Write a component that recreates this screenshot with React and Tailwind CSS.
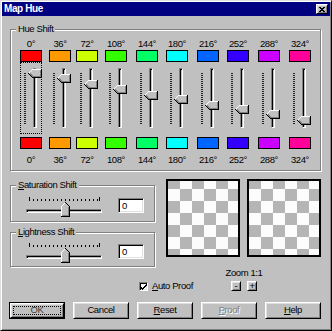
import React from "react";

// Win95 bevels
const raised =
  "bg-[#c0c0c0] border border-t-white border-l-white border-r-black border-b-black shadow-[inset_1px_1px_0_#dfdfdf,inset_-1px_-1px_0_#808080]";
const sunken =
  "bg-white border border-t-[#808080] border-l-[#808080] border-r-white border-b-white shadow-[inset_1px_1px_0_#000,inset_-1px_-1px_0_#dfdfdf]";
const etched =
  "border border-[#808080] shadow-[inset_1px_1px_0_#fff,1px_1px_0_#fff]";

const hues = [
  { label: "0°", swatch: "bg-[#ff0000]", space: "mr-[7px]", thumb: "top-[7px]" },
  { label: "36°", swatch: "bg-[#ff9900]", space: "mr-[5px]", thumb: "top-[12px]" },
  { label: "72°", swatch: "bg-[#ccff00]", space: "mr-[7px]", thumb: "top-[18px]" },
  { label: "108°", swatch: "bg-[#33ff00]", space: "mr-[9px]", thumb: "top-[23px]" },
  { label: "144°", swatch: "bg-[#00ff66]", space: "mr-[8px]", thumb: "top-[29px]" },
  { label: "180°", swatch: "bg-[#00ffff]", space: "mr-[9px]", thumb: "top-[33px]" },
  { label: "216°", swatch: "bg-[#0066ff]", space: "mr-[8px]", thumb: "top-[39px]" },
  { label: "252°", swatch: "bg-[#3300ff]", space: "mr-[9px]", thumb: "top-[43px]" },
  { label: "288°", swatch: "bg-[#cc00ff]", space: "mr-[9px]", thumb: "top-[48px]" },
  { label: "324°", swatch: "bg-[#ff0099]", space: "", thumb: "top-[54px]" },
];

const VThumb = () => (
  <svg width="14" height="9" viewBox="0 0 14 9" shapeRendering="crispEdges">
    <path d="M4.5 0.5H13.5V8.5H4.5L0.5 4.5Z" fill="#c0c0c0" />
    <path d="M13 0.5H4.5L0.5 4.5" fill="none" stroke="#fff" />
    <path d="M0.5 4.5L4.5 8.5H13.5V0" fill="none" stroke="#000" />
    <path d="M2 4.5L5 7.5H12.5V1" fill="none" stroke="#808080" />
  </svg>
);

const HThumb = () => (
  <svg width="9" height="15" viewBox="0 0 9 15" shapeRendering="crispEdges">
    <path d="M0.5 14.5V4.5L4.5 0.5L8.5 4.5V14.5Z" fill="#c0c0c0" />
    <path d="M0.5 14V4.5L4.5 0.5" fill="none" stroke="#fff" />
    <path d="M4.5 0.5L8.5 4.5V14.5H0" fill="none" stroke="#000" />
    <path d="M7.5 5V13.5H1" fill="none" stroke="#808080" />
  </svg>
);

const GroupLabel = ({ children }) => (
  <span className="absolute -top-[7px] left-[5px] bg-[#c0c0c0] px-[2px] leading-[12px] whitespace-nowrap">
    {children}
  </span>
);

const ShiftGroup = ({ label, pad }) => (
  <div className={`relative w-[145px] ${etched} ${pad}`}>
    <GroupLabel>{label}</GroupLabel>
    <div className="flex items-start pl-[15px]">
      <div className="relative h-[20px] w-[76px]">
        <div className="absolute left-[3px] top-[1px] h-[2px] w-[71px] bg-[repeating-linear-gradient(90deg,#000_0_1px,transparent_1px_4px)]" />
        <div className="absolute left-[3px] -top-[1px] h-[4px] w-px bg-black" />
        <div className="absolute left-[73px] -top-[1px] h-[4px] w-px bg-black" />
        <div className="absolute left-0 top-[11px] h-[4px] w-[76px] border border-t-[#808080] border-l-[#808080] border-r-white border-b-white shadow-[inset_1px_1px_0_#000]" />
        <div className="absolute left-[35px] top-[4px] leading-none">
          <HThumb />
        </div>
      </div>
      <div className={`ml-[16px] h-[15px] w-[26px] pl-[3px] leading-[13px] ${sunken}`}>0</div>
    </div>
  </div>
);

const Checker = () => (
  <div className="h-[78px] w-[74px] border-2 border-black bg-[conic-gradient(#fcfcfc_25%,#b5b5b5_0_50%,#fcfcfc_0_75%,#b5b5b5_0)] bg-[length:24px_24px] bg-[position:0_-4px]" />
);

const Btn = ({ children, className = "" }) => (
  <div className={`flex h-[17px] w-[56px] items-center justify-center ${raised} ${className}`}>
    {children}
  </div>
);

export default function App() {
  return (
    <div className="h-[331px] w-[332px] overflow-hidden bg-[#c0c0c0] font-['Liberation_Sans',Arial,sans-serif] text-[9.5px] tracking-[-0.4px] text-black">
      <div className="flex h-[331px] w-[332px] flex-col border border-t-[#dfdfdf] border-l-[#dfdfdf] border-r-black border-b-black p-px shadow-[inset_1px_1px_0_#fff,inset_-1px_-1px_0_#808080]">
        {/* title bar */}
        <div className="flex h-[14px] shrink-0 items-center justify-between bg-[#000080] pl-[2px] pr-[2px]">
          <span className="text-[10px] font-bold leading-none tracking-[-0.4px] text-white">Map Hue</span>
          <div className={`flex h-[10px] w-[12px] items-center justify-center ${raised}`}>
            <svg width="6" height="5" viewBox="0 0 6 5" shapeRendering="crispEdges">
              <path d="M0 0h2v1h2V0h2v1H5v1H4v1h1v1h1v1H4V4H2v1H0V4h1V3h1V2H1V1H0Z" fill="#000" />
            </svg>
          </div>
        </div>

        {/* hue shift */}
        <div className={`relative ml-[8px] mt-[13px] h-[142px] w-[311px] shrink-0 ${etched}`}>
          <GroupLabel>Hue Shift</GroupLabel>
          <div className="flex pl-[9px] pt-[8px]">
            {hues.map((h, i) => (
              <div key={h.label} className={`flex w-[22px] flex-col items-center ${h.space}`}>
                <div className="h-[11px] whitespace-nowrap leading-[11px]">{h.label}</div>
                <div className={`mt-[1px] h-[12px] w-[22px] border border-black ${h.swatch}`} />
                <div className="relative h-[72px] w-[22px]">
                  {i === 0 && <div className="absolute inset-0 border border-dotted border-black" />}
                  <div className="absolute left-[4px] top-[11px] h-[52px] w-[2px] bg-[repeating-linear-gradient(to_bottom,#222_0_1px,transparent_1px_2px)]" />
                  <div className="absolute left-[13px] top-[6px] h-[60px] w-[4px] border border-t-[#808080] border-l-[#808080] border-r-white border-b-white shadow-[inset_1px_1px_0_#000]" />
                  <div className={`absolute left-[8px] leading-none ${h.thumb}`}>
                    <VThumb />
                  </div>
                </div>
                <div className={`mt-[3px] h-[12px] w-[22px] border border-black ${h.swatch}`} />
                <div className="mt-[5px] h-[11px] whitespace-nowrap leading-[11px]">{h.label}</div>
              </div>
            ))}
          </div>
        </div>

        {/* shift groups + previews */}
        <div className="mt-[8px] flex shrink-0">
          <div className="ml-[8px] flex flex-col pt-[6px]">
            <ShiftGroup
              label={<><span className="underline">S</span>aturation Shift</>}
              pad="h-[37px] pt-[12px]"
            />
            <div className="mt-[10px]">
              <ShiftGroup
                label={<><span className="underline">L</span>ightness Shift</>}
                pad="h-[35px] pt-[11px]"
              />
            </div>
          </div>
          <div className="ml-[11px] flex gap-[7px]">
            <Checker />
            <Checker />
          </div>
        </div>

        {/* auto proof + zoom */}
        <div className="flex h-[24px] shrink-0 items-end">
          <div className="ml-[137px] flex h-[10px] w-[85px] items-center gap-[4px]">
            <div className={`relative flex h-[9px] w-[9px] items-center justify-center ${sunken}`}>
              <svg width="7" height="7" viewBox="0 0 7 7" shapeRendering="crispEdges">
                <path d="M6 0v2H5v1H4v1H3v1H2V4H1V3H0v2h1v1h1v1h1V6h1V5h1V4h1V3h1V0Z" fill="#000" />
              </svg>
            </div>
            <span className="whitespace-nowrap">
              <span className="underline">A</span>uto Proof
            </span>
          </div>
          <div className="flex w-[40px] flex-col items-center">
            <div className="h-[11px] whitespace-nowrap leading-[11px]">Zoom 1:1</div>
            <div className="mt-[3px] flex gap-[6px]">
              <div className={`flex h-[10px] w-[10px] items-center justify-center leading-none ${raised}`}>-</div>
              <div className={`flex h-[10px] w-[10px] items-center justify-center leading-none ${raised}`}>+</div>
            </div>
          </div>
        </div>

        {/* buttons */}
        <div className="ml-[7px] mt-[11px] flex shrink-0 gap-[8px]">
          <div className="h-[17px] w-[56px] border border-black">
            <div className={`relative flex h-full w-full items-center justify-center ${raised}`}>
              <div className="absolute inset-[2px] border border-dotted border-black" />
              <span className="text-[#404040]">OK</span>
            </div>
          </div>
          <Btn>Cancel</Btn>
          <Btn>
            <span><span className="underline">R</span>eset</span>
          </Btn>
          <Btn className="text-[#808080] [text-shadow:1px_1px_0_#fff]">
            <span><span className="underline">P</span>roof</span>
          </Btn>
          <Btn>
            <span><span className="underline">H</span>elp</span>
          </Btn>
        </div>
      </div>
    </div>
  );
}
